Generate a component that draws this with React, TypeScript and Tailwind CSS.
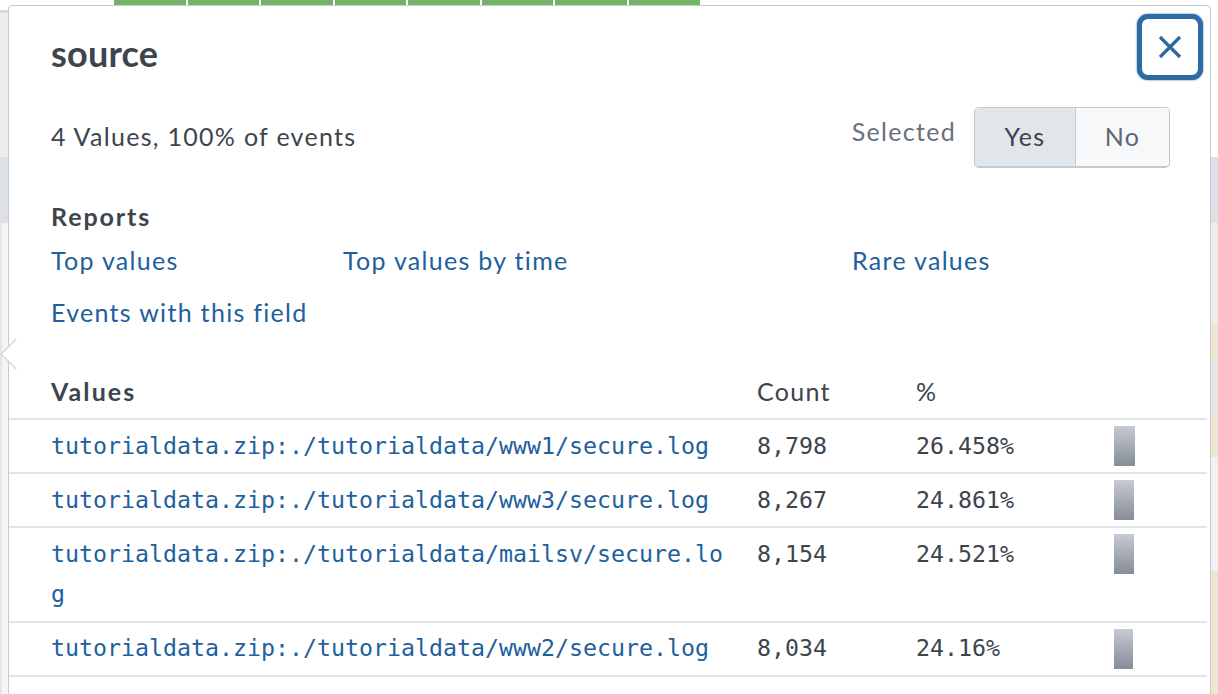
import React from "react";

const rows = [
  { v: "tutorialdata.zip:./tutorialdata/www1/secure.log", c: "8,798", p: "26.458%", n: 26.458 },
  { v: "tutorialdata.zip:./tutorialdata/www3/secure.log", c: "8,267", p: "24.861%", n: 24.861 },
  { v: "tutorialdata.zip:./tutorialdata/mailsv/secure.log", c: "8,154", p: "24.521%", n: 24.521 },
  { v: "tutorialdata.zip:./tutorialdata/www2/secure.log", c: "8,034", p: "24.16%", n: 24.16 },
];

const sans = "font-['Lato','Open_Sans',sans-serif]";
const mono = "font-['DejaVu_Sans_Mono','Liberation_Mono',monospace]";

function CloseIcon() {
  return (
    <svg width="24" height="24" viewBox="0 0 24 24" fill="none">
      <path d="M2 2 L22 22 M22 2 L2 22" stroke="#2d67a1" strokeWidth="3.2" strokeLinecap="butt" />
    </svg>
  );
}

export default function App() {
  return (
    <div className={`relative w-[1218px] h-[694px] overflow-hidden bg-white ${sans}`}>
      {/* page underneath the popover */}
      <div className="flex flex-col h-full">
        <div className="h-[5px] flex pl-[114px] gap-[2px] bg-white">
          {Array.from({ length: 8 }).map((_, i) => (
            <div key={i} className="w-[71.5px] h-full bg-[#72b564]" />
          ))}
        </div>
        <div className="h-[152px] flex">
          <div className="w-[9px] bg-[#eceef0] border-t-[3px] border-[#d9dce0] mt-[5px]" />
          <div className="flex-1" />
          <div className="w-[9px] bg-white" />
        </div>
        <div className="h-[66px] bg-[#dde0e4]" />
        <div className="flex-1 flex">
          <div className="w-[9px] bg-[#eceef0] flex">
            <div className="w-[2px] bg-[#e3e5e8]" />
            <div className="flex-1 bg-[#f4f5f6]" />
          </div>
          <div className="flex-1" />
          <div className="w-[9px] flex flex-col bg-[#eceef0]">
            <div className="h-[100px]" />
            <div className="h-[40px] bg-[#efe6d2]" />
            <div className="h-[54px] bg-[#e4e6e9]" />
            <div className="h-[40px] bg-[#efe6d2]" />
            <div className="h-[114px] bg-[#f2f2f4]" />
            <div className="flex-1 bg-[#efe6d2]" />
          </div>
        </div>
      </div>

      {/* popover */}
      <div className="absolute left-[8px] top-[5px] w-[1203px] h-[720px] bg-white border border-[#c5cbd3] rounded-t-[4px] text-[#3c444d]">
        <div className="absolute left-[-4px] top-[337px] w-[22px] h-[22px] rotate-45 bg-white border-l border-b border-[#c5cbd3]" />

        <div className="relative flex flex-col">
          {/* title row */}
          <div className="flex justify-between items-start pl-[42px] pr-[7px] pt-[8px]">
            <div className="mt-[19px] text-[36px] leading-[40px] font-bold tracking-[0.2px]">source</div>
            <button className="w-[66px] h-[66px] rounded-[11px] border-[5px] border-[#2e6aa4] bg-white flex items-center justify-center shadow-[0_0_2px_#2e6aa4]">
              <CloseIcon />
            </button>
          </div>

          {/* values / selected row */}
          <div className="flex justify-between items-start pl-[42px] pr-[40px] mt-[27px] text-[25px] tracking-[1.3px]">
            <div className="mt-[14px] leading-[30px]">4 Values, 100% of events</div>
            <div className="flex items-start gap-[18px]">
              <div className="mt-[9px] leading-[30px] text-[#68717c]">Selected</div>
              <div className="flex h-[61px] rounded-[5px] border border-[#c3cad2] border-b-[2px] overflow-hidden">
                <div className="w-[101px] flex items-center justify-center bg-[#e1e6eb] text-[#3c444d] border-r border-[#c3cad2]">Yes</div>
                <div className="w-[93px] flex items-center justify-center bg-[#f7f8fa] text-[#5c6773]">No</div>
              </div>
            </div>
          </div>

          {/* reports */}
          <div className="pl-[42px] mt-[33px] text-[25px] leading-[30px] font-bold tracking-[1.9px]">Reports</div>
          <div className="pl-[42px] mt-[14px] flex flex-col gap-y-[22px] text-[25px] tracking-[1.3px] leading-[30px] text-[#21609c]">
            <div className="flex">
              <span className="w-[292px]">Top values</span>
              <span className="w-[509px]">Top values by time</span>
              <span>Rare values</span>
            </div>
            <div className="flex">
              <span>Events with this field</span>
            </div>
          </div>

          {/* table */}
          <div className="mt-[49px] mr-[3px] flex flex-col">
            <div className="flex h-[44px] border-b-2 border-[#e1e5ea] text-[25px] leading-[30px] tracking-[1.3px]">
              <div className="w-[748px] pl-[42px] font-bold tracking-[2.1px]">Values</div>
              <div className="w-[159px]">Count</div>
              <div className="w-[198px]">%</div>
              <div className="flex-1" />
            </div>
            {rows.map((r) => (
              <div key={r.v} className="flex border-b-2 border-[#e1e5ea]">
                <div className={`w-[748px] pl-[42px] pr-[28px] py-[5.75px] ${mono} text-[23.25px] leading-[40.5px] text-[#21609c] break-all`}>
                  {r.v}
                </div>
                <div className={`w-[159px] py-[5.75px] ${mono} text-[23.25px] leading-[40.5px]`}>{r.c}</div>
                <div className={`w-[198px] py-[5.75px] ${mono} text-[23.25px] leading-[40.5px]`}>{r.p}</div>
                <div className="flex-1 pt-[6px]">
                  <div
                    className="h-[40px] bg-gradient-to-b from-[#c6cad3] to-[#868d98]"
                    style={{ width: `${Math.round(r.n * 0.8)}px` }}
                  />
                </div>
              </div>
            ))}
          </div>
        </div>
      </div>
    </div>
  );
}
